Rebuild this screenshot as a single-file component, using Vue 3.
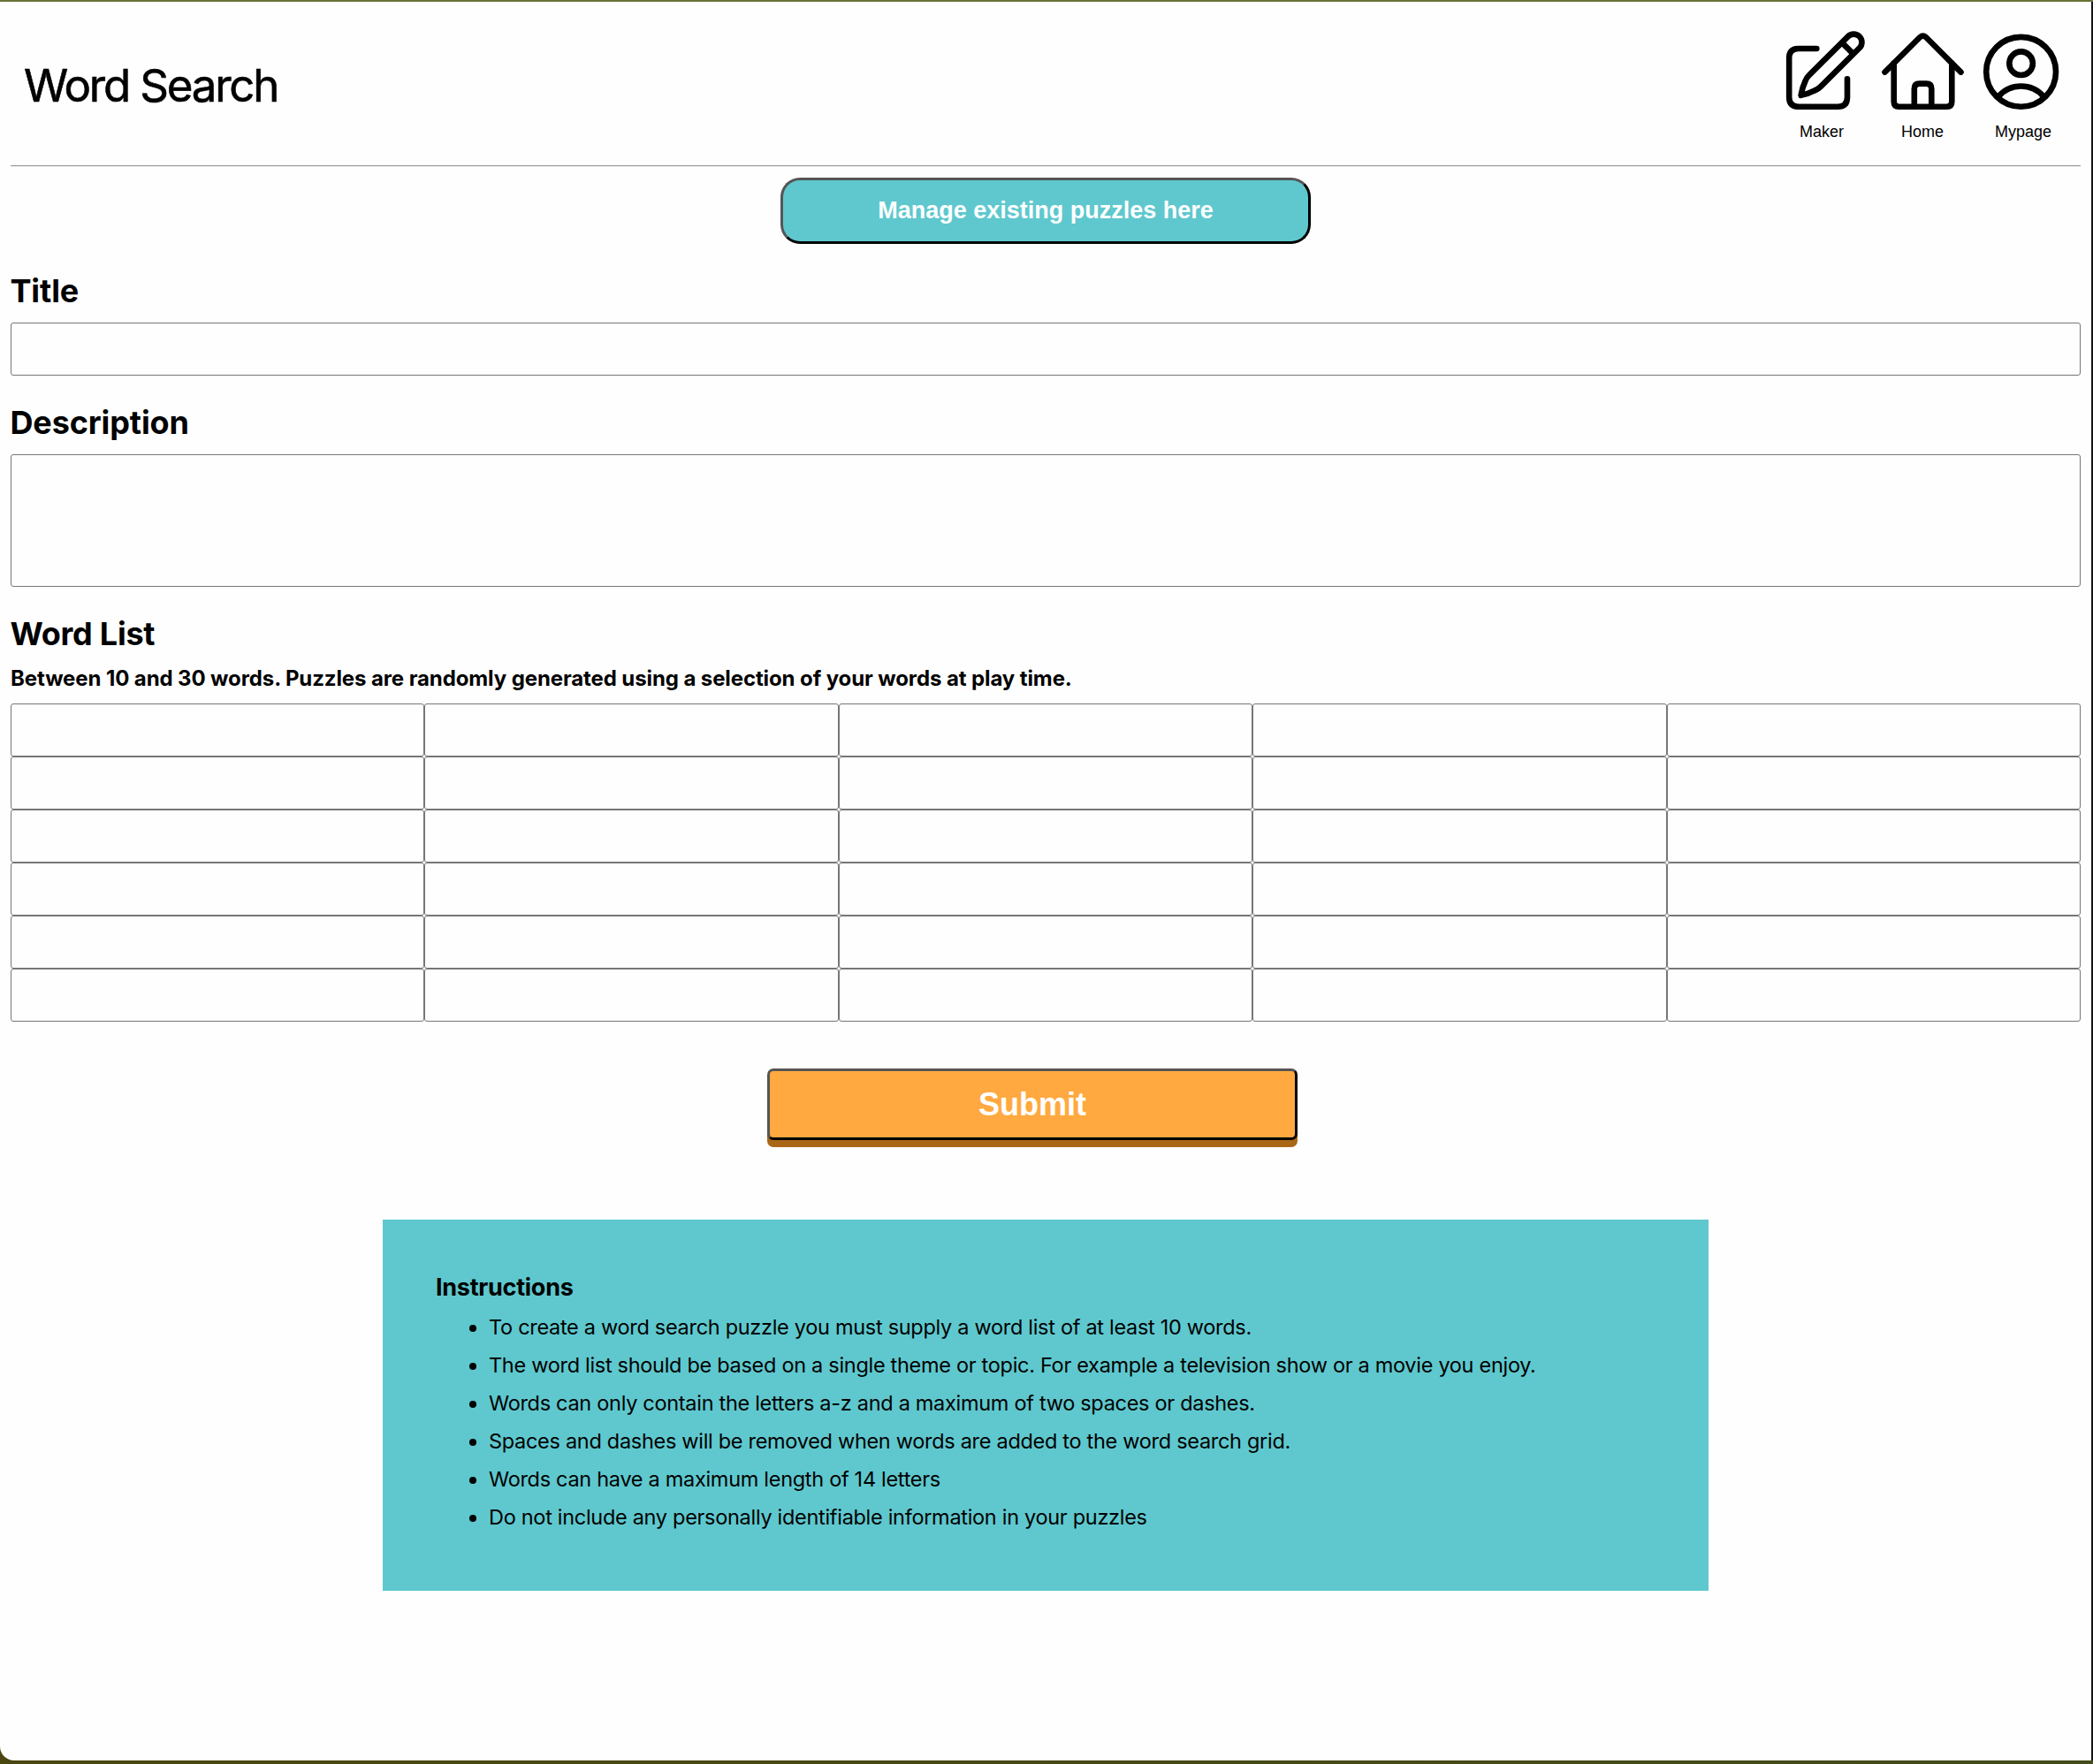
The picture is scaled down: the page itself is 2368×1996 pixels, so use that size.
<script setup>
const sections = [
  { label: 'Title', tag: 'input' },
  { label: 'Description', tag: 'textarea' },
]

const instructions = [
  'To create a word search puzzle you must supply a word list of at least 10 words.',
  'The word list should be based on a single theme or topic. For example a television show or a movie you enjoy.',
  'Words can only contain the letters a-z and a maximum of two spaces or dashes.',
  'Spaces and dashes will be removed when words are added to the word search grid.',
  'Words can have a maximum length of 14 letters',
  'Do not include any personally identifiable information in your puzzles',
]
</script>

<template>
  <div class="window">
    <div class="page">
      <header class="header">
        <h1>Word Search</h1>
        <nav class="nav">
          <a class="nav-item">
            <svg viewBox="0 0 114 100">
              <path d="M51.3 25H31Q20.2 25 20.2 35.8V80Q20.2 90.7 31 90.7H75.2Q86 90.7 86 80V59.3" />
              <path d="M86.7 11.3A9.2 9.2 0 0 1 99.8 24.3L56 67.8Q53 70.8 49.2 72.4Q42 76.2 33.6 77.8Q35 69 38.6 61.5Q40 57.6 43 54.8Z" />
              <path d="M80.6 18.8L92.4 30.6" />
            </svg>
            <span>Maker</span>
          </a>
          <a class="nav-item">
            <svg viewBox="0 0 114 100">
              <path d="M14.5 51.6L54.3 12Q57.6 9.4 60.9 12L100.5 51.6" />
              <path d="M24.7 41.5V85Q24.7 90.7 30.4 90.7H84.6Q90.3 90.7 90.3 85V41.5" />
              <path d="M47.8 90.7V70.4Q47.8 64.6 53.6 64.6H61.5Q67.3 64.6 67.3 70.4V90.7" />
            </svg>
            <span>Home</span>
          </a>
          <a class="nav-item">
            <svg viewBox="0 0 114 100">
              <circle cx="54.6" cy="51.3" r="39.4" />
              <circle cx="54.6" cy="41.7" r="13.3" />
              <path d="M29 79.3A33.8 33.8 0 0 1 80.2 79.3" />
            </svg>
            <span>Mypage</span>
          </a>
        </nav>
      </header>

      <hr />

      <main class="content">
        <button class="manage">Manage existing puzzles here</button>

        <section v-for="s in sections" :key="s.label">
          <h2>{{ s.label }}</h2>
          <component :is="s.tag" class="field" :class="{ tall: s.tag === 'textarea' }" />
        </section>

        <section>
          <h2 class="list-title">Word List</h2>
          <h3>Between 10 and 30 words. Puzzles are randomly generated using a selection of your words at play time.</h3>
          <div class="words">
            <input v-for="n in 30" :key="n" class="field" />
          </div>
        </section>

        <button class="submit">Submit</button>

        <aside class="instructions">
          <h4>Instructions</h4>
          <ul>
            <li v-for="line in instructions" :key="line">{{ line }}</li>
          </ul>
        </aside>
      </main>
    </div>
  </div>
</template>

<style>
body {
  margin: 0;
}
</style>

<style scoped>
.window {
  box-sizing: border-box;
  height: 1996px;
  padding: 2px 0 4px;
  background: linear-gradient(#6a7135 0 2px, transparent 2px), linear-gradient(90deg, #4a4711, #434b1a);
  font-family: Inter, "Liberation Sans", sans-serif;
  color: #000;
}

.page {
  box-sizing: border-box;
  height: 100%;
  padding: 0 12px;
  background: #fefefe;
  border-right: 2px solid #151515;
  border-bottom-left-radius: 16px;
}

.header {
  box-sizing: border-box;
  display: flex;
  justify-content: space-between;
  height: 185px;
  padding: 0 8px 0 15px;
}

h1,
h2,
h3,
h4 {
  margin: 0;
  font-weight: 700;
}

h1 {
  align-self: center;
  padding-top: 4px;
  font-size: 51px;
  font-weight: 400;
  line-height: 60px;
  letter-spacing: -2.2px;
  -webkit-text-stroke: 0.6px #000;
}

.nav {
  display: flex;
  padding-top: 28px;
}

.nav-item {
  display: flex;
  flex-direction: column;
  align-items: center;
  gap: 7px;
  width: 114px;
  font: 18px/24px "Liberation Sans", Arial, sans-serif;
}

.nav-item svg {
  width: 114px;
  height: 100px;
  fill: none;
  stroke: #000;
  stroke-width: 6.6;
  stroke-linecap: round;
  stroke-linejoin: round;
}

hr {
  width: 100%;
  height: 0;
  margin: 0;
  border: 0;
  border-top: 1px solid #959595;
  border-bottom: 1px solid #eee;
}

.content {
  display: flex;
  flex-direction: column;
}

button {
  box-sizing: border-box;
  align-self: center;
  width: 600px;
  border: 3px solid;
  border-color: #555 #000 #000 #555;
  color: #fff;
  font-family: "Liberation Sans", Arial, sans-serif;
  font-weight: 700;
}

.manage {
  height: 75px;
  margin-top: 12px;
  padding: 0;
  border-radius: 22px;
  background: #5ec8ce;
  font-size: 27px;
}

h2 {
  margin: 31px 0 14px -0.6px;
  font-size: 36px;
  line-height: 44px;
  letter-spacing: -0.1px;
}

.list-title {
  margin-bottom: 14px;
  letter-spacing: -0.25px;
}

h3 {
  margin-bottom: 13px;
  font-size: 24px;
  line-height: 30px;
  letter-spacing: -0.105px;
}

.field {
  box-sizing: border-box;
  display: block;
  width: 100%;
  height: 60px;
  margin: 0;
  padding: 3px;
  border: 1px solid #767676;
  border-radius: 3px;
  background: #fefefe;
  resize: none;
}

.tall {
  height: 150px;
}

.words {
  display: grid;
  grid-template-columns: repeat(5, 1fr);
}

.submit {
  height: 81px;
  margin: 53px 30px 0 0;
  padding: 0;
  border-radius: 7px;
  background: #ffa940;
  box-shadow: 0 8px 0 #a96617;
  font-size: 36px;
}

.instructions {
  box-sizing: border-box;
  align-self: center;
  width: 1500px;
  height: 420px;
  margin-top: 90px;
  padding: 61px 60px 60px;
  background: #5ec8ce;
}

h4 {
  font-size: 27px;
  line-height: 32px;
  letter-spacing: -0.27px;
}

ul {
  margin: 7px 0 0;
  padding: 0 0 0 60px;
  list-style: none;
}

li {
  display: flex;
  align-items: center;
  font-size: 23.5px;
  line-height: 43px;
  letter-spacing: -0.3px;
  white-space: nowrap;
}

li::before {
  content: "";
  width: 8px;
  height: 8px;
  margin: 3px 14px 0 -22px;
  border-radius: 50%;
  background: #000;
}
</style>
